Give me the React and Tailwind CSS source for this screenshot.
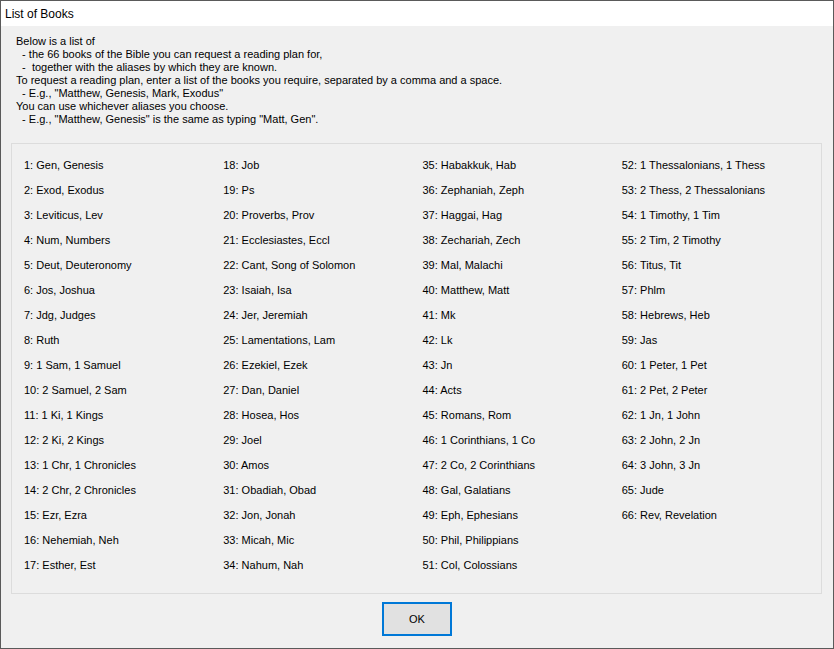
import React from 'react';

const books = [
  "1: Gen, Genesis", "2: Exod, Exodus", "3: Leviticus, Lev", "4: Num, Numbers", "5: Deut, Deuteronomy",
  "6: Jos, Joshua", "7: Jdg, Judges", "8: Ruth", "9: 1 Sam, 1 Samuel", "10: 2 Samuel, 2 Sam",
  "11: 1 Ki, 1 Kings", "12: 2 Ki, 2 Kings", "13: 1 Chr, 1 Chronicles", "14: 2 Chr, 2 Chronicles",
  "15: Ezr, Ezra", "16: Nehemiah, Neh", "17: Esther, Est",
  "18: Job", "19: Ps", "20: Proverbs, Prov", "21: Ecclesiastes, Eccl", "22: Cant, Song of Solomon",
  "23: Isaiah, Isa", "24: Jer, Jeremiah", "25: Lamentations, Lam", "26: Ezekiel, Ezek", "27: Dan, Daniel",
  "28: Hosea, Hos", "29: Joel", "30: Amos", "31: Obadiah, Obad", "32: Jon, Jonah", "33: Micah, Mic",
  "34: Nahum, Nah",
  "35: Habakkuk, Hab", "36: Zephaniah, Zeph", "37: Haggai, Hag", "38: Zechariah, Zech", "39: Mal, Malachi",
  "40: Matthew, Matt", "41: Mk", "42: Lk", "43: Jn", "44: Acts", "45: Romans, Rom",
  "46: 1 Corinthians, 1 Co", "47: 2 Co, 2 Corinthians", "48: Gal, Galatians", "49: Eph, Ephesians",
  "50: Phil, Philippians", "51: Col, Colossians",
  "52: 1 Thessalonians, 1 Thess", "53: 2 Thess, 2 Thessalonians", "54: 1 Timothy, 1 Tim",
  "55: 2 Tim, 2 Timothy", "56: Titus, Tit", "57: Phlm", "58: Hebrews, Heb", "59: Jas",
  "60: 1 Peter, 1 Pet", "61: 2 Pet, 2 Peter", "62: 1 Jn, 1 John", "63: 2 John, 2 Jn",
  "64: 3 John, 3 Jn", "65: Jude", "66: Rev, Revelation",
];

// 17 per column, 4 columns
const columns = [0, 17, 34, 51].map(start => books.slice(start, start + 17));

const ListOfBooks = () => {
  return (
    <div className="w-[834px] h-[649px] border border-[#5a5a5a] flex flex-col bg-[#f0f0f0] text-black font-['Liberation_Sans',Arial,sans-serif]">
      {/* Title bar */}
      <div className="h-[25px] bg-white flex items-center pl-[4px] text-[12px] shrink-0">
        List of Books
      </div>

      <div className="flex-1 flex flex-col">
        {/* Intro text */}
        <div className="pl-[15px] pt-[9px] text-[11px] leading-[13px] whitespace-pre">
          <div>Below is a list of</div>
          <div>{"  - the 66 books of the Bible you can request a reading plan for,"}</div>
          <div>{"  -  together with the aliases by which they are known."}</div>
          <div>To request a reading plan, enter a list of the books you require, separated by a comma and a space.</div>
          <div>{"  - E.g., \"Matthew, Genesis, Mark, Exodus\""}</div>
          <div>You can use whichever aliases you choose.</div>
          <div>{"  - E.g., \"Matthew, Genesis\" is the same as typing \"Matt, Gen\"."}</div>
        </div>

        {/* Book list group */}
        <div className="ml-[10px] mt-[17px] w-[811px] h-[451px] border border-[#dcdcdc] pl-[12px] pt-[9px] flex">
          {columns.map((col, i) => (
            <div key={i} className="w-[200px] flex flex-col">
              {col.map(b => (
                <div key={b} className="h-[25px] leading-[25px] text-[11px] whitespace-nowrap">{b}</div>
              ))}
            </div>
          ))}
        </div>

        {/* OK button */}
        <div className="flex justify-center mt-[8px]">
          <button className="w-[70px] h-[34px] border-2 border-[#0078d7] bg-[#e1e1e1] text-[11px]">
            OK
          </button>
        </div>
      </div>
    </div>
  );
};

export default ListOfBooks;
